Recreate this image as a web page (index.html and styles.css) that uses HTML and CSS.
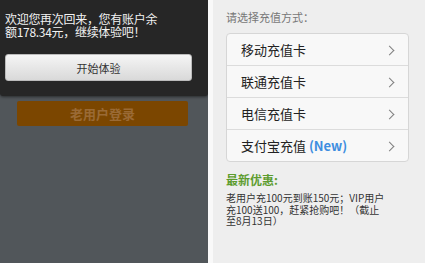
FILE: index.html
```html
<!doctype html>
<html>
<head>
<meta charset="utf-8">
<title>充值</title>
<link rel="stylesheet" href="styles.css">
</head>
<body>
<div class="screen">
	<div class="left">
		<div class="dialog">
			<p class="msg">欢迎您再次回来，您有账户余<br>额178.34元，继续体验吧！</p>
			<a class="btn-start" href="javascript:;">开始体验</a>
		</div>
		<a class="btn-login" href="javascript:;">老用户登录</a>
	</div>
	<div class="gap"></div>
	<div class="right">
		<p class="tip">请选择充值方式：</p>
		<ul class="pay">
			<li><span>移动充值卡</span><i class="arrow"></i></li>
			<li><span>联通充值卡</span><i class="arrow"></i></li>
			<li><span>电信充值卡</span><i class="arrow"></i></li>
			<li><span>支付宝充值 <b>(New)</b></span><i class="arrow"></i></li>
		</ul>
		<h3 class="news">最新优惠:</h3>
		<p class="info">老用户充100元到账150元；VIP用户<br>充100送100，赶紧抢购吧！（截止<br>至8月13日）</p>
	</div>
</div>
</body>
</html>
```

FILE: styles.css
```css
*{margin:0; padding:0;}
ul{list-style:none;}
a{text-decoration:none;}
body{font-family:"Noto Sans CJK SC","Liberation Sans",sans-serif; background:#fff;}
.screen{display:flex; width:425px; height:263px; overflow:hidden;}

.left{width:208px; background:#51565a; display:flex; flex-direction:column;}
.dialog{background:#262626; height:96px; box-sizing:border-box; padding:12px 5px 0; border-radius:0 0 3px 3px; box-shadow:0 1px 3px rgba(0,0,0,0.5);}
.msg{color:#f2f2f2; font-size:12px; line-height:13px; letter-spacing:-0.3px;}
.btn-start{display:block; height:27px; line-height:27px; margin:16px 11px 0 0; border-radius:3px; background:linear-gradient(#f5f5f5,#d9d9d9); border:1px solid #bbb; box-sizing:border-box; text-align:center; color:#333; font-size:11px;}
.btn-login{display:block; margin:5px 20px 0 17px; height:25px; line-height:25px; background:#7b4600; border-radius:2px; text-align:center; color:#9a6a35; font-size:13px; font-weight:bold;}

.gap{width:5px; background:#f9f9f9;}
.right{flex:1; background:#eeeeee; padding:0 16px 0 13px;}
.tip{color:#777; font-size:11px; margin-top:9px; height:24px;}
.pay{background:#f8f8f8; border:1px solid #d6d6d6; border-radius:4px;}
.pay li{height:31px; border-top:1px solid #dcdcdc; display:flex; align-items:center; justify-content:space-between; padding:0 15px 0 14px; font-size:13px; color:#222;}
.pay li:first-child{border-top:0;}
.pay li b{color:#3e8ee0;}
.arrow{width:6px; height:6px; border-right:1.5px solid #808080; border-top:1.5px solid #808080; transform:rotate(45deg); margin-top:1px;}
.news{color:#5d9c2e; font-size:12px; margin-top:9px; height:18px; line-height:18px;}
.info{color:#333; font-size:10px; line-height:11.7px; margin-top:3px;}
```
